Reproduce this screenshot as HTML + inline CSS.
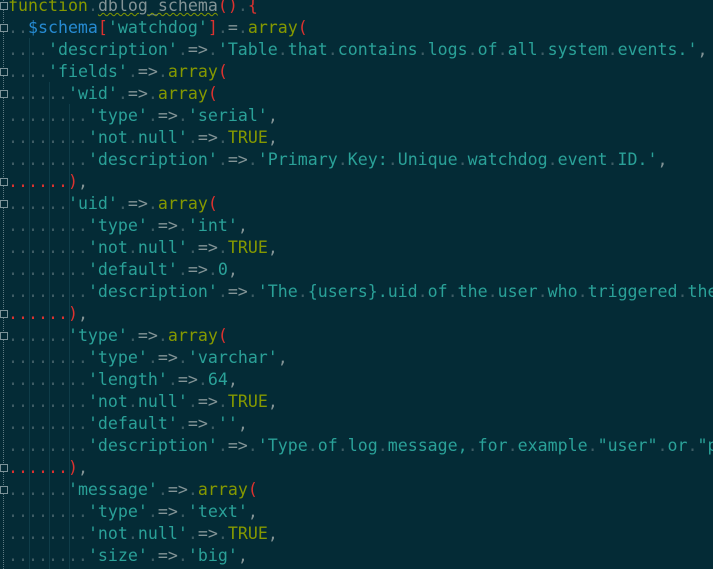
<!DOCTYPE html>
<html><head><meta charset="utf-8"><style>
html,body{margin:0;padding:0;background:#042b36;width:713px;height:569px;overflow:hidden;position:relative}
#c{position:absolute;left:8px;top:-5px;width:705px;height:574px;overflow:hidden;font-family:"DejaVu Sans Mono","Liberation Mono",monospace;font-size:16.6px;line-height:22px;white-space:pre;color:#2aa198}
i{font-style:normal;color:#3e5c64}
.k{color:#859900}.p{color:#dc322f}.v{color:#268bd2}.o{color:#839496}.f{color:#839496;text-decoration:underline wavy #859900;text-decoration-thickness:1px}
.r i{color:#dc322f}
#g{position:absolute;left:3px;top:0;width:0;height:569px;border-left:1px dotted #5c7a82}
.fd{position:absolute;left:0;width:6px;height:6px;border:1px solid #7c9399;background:#042b36}
.ig{position:absolute;top:38px;bottom:0;width:1px;background:#0f3d49}
</style></head><body>
<div class="ig" style="left:29px"></div>
<div class="ig" style="left:49px;top:82px"></div>
<div class="ig" style="left:69px;top:104px"></div>
<div id="g"></div>
<div class="fd" style="top:2px"></div><div class="fd" style="top:24px"></div><div class="fd" style="top:68px"></div><div class="fd" style="top:90px"></div><div class="fd" style="top:178px"></div><div class="fd" style="top:200px"></div><div class="fd" style="top:310px"></div><div class="fd" style="top:332px"></div><div class="fd" style="top:464px"></div><div class="fd" style="top:486px"></div>
<div id="c"><span class="k">function</span><i>.</i><span class="f">dblog_schema</span><span class="p">()</span><i>.</i><span class="p">{</span>
<i>..</i><span class="v">$schema</span><span class="p">[</span>'watchdog'<span class="p">]</span><i>.</i><span class="o">=</span><i>.</i><span class="k">array</span><span class="p">(</span>
<i>....</i>'description'<i>.</i><span class="o">=&gt;</span><i>.</i>'Table<i>.</i>that<i>.</i>contains<i>.</i>logs<i>.</i>of<i>.</i>all<i>.</i>system<i>.</i>events.'<span class="o">,</span>
<i>....</i>'fields'<i>.</i><span class="o">=&gt;</span><i>.</i><span class="k">array</span><span class="p">(</span>
<i>......</i>'wid'<i>.</i><span class="o">=&gt;</span><i>.</i><span class="k">array</span><span class="p">(</span>
<i>........</i>'type'<i>.</i><span class="o">=&gt;</span><i>.</i>'serial'<span class="o">,</span>
<i>........</i>'not<i>.</i>null'<i>.</i><span class="o">=&gt;</span><i>.</i><span class="k">TRUE</span><span class="o">,</span>
<i>........</i>'description'<i>.</i><span class="o">=&gt;</span><i>.</i>'Primary<i>.</i>Key:<i>.</i>Unique<i>.</i>watchdog<i>.</i>event<i>.</i>ID.'<span class="o">,</span>
<span class="r"><i>......</i></span><span class="p">)</span><span class="o">,</span>
<i>......</i>'uid'<i>.</i><span class="o">=&gt;</span><i>.</i><span class="k">array</span><span class="p">(</span>
<i>........</i>'type'<i>.</i><span class="o">=&gt;</span><i>.</i>'int'<span class="o">,</span>
<i>........</i>'not<i>.</i>null'<i>.</i><span class="o">=&gt;</span><i>.</i><span class="k">TRUE</span><span class="o">,</span>
<i>........</i>'default'<i>.</i><span class="o">=&gt;</span><i>.</i>0<span class="o">,</span>
<i>........</i>'description'<i>.</i><span class="o">=&gt;</span><i>.</i>'The<i>.</i>{users}.uid<i>.</i>of<i>.</i>the<i>.</i>user<i>.</i>who<i>.</i>triggered<i>.</i>the<i>.</i>event.'<span class="o">,</span>
<span class="r"><i>......</i></span><span class="p">)</span><span class="o">,</span>
<i>......</i>'type'<i>.</i><span class="o">=&gt;</span><i>.</i><span class="k">array</span><span class="p">(</span>
<i>........</i>'type'<i>.</i><span class="o">=&gt;</span><i>.</i>'varchar'<span class="o">,</span>
<i>........</i>'length'<i>.</i><span class="o">=&gt;</span><i>.</i>64<span class="o">,</span>
<i>........</i>'not<i>.</i>null'<i>.</i><span class="o">=&gt;</span><i>.</i><span class="k">TRUE</span><span class="o">,</span>
<i>........</i>'default'<i>.</i><span class="o">=&gt;</span><i>.</i>''<span class="o">,</span>
<i>........</i>'description'<i>.</i><span class="o">=&gt;</span><i>.</i>'Type<i>.</i>of<i>.</i>log<i>.</i>message,<i>.</i>for<i>.</i>example<i>.</i>"user"<i>.</i>or<i>.</i>"page<i>.</i>not<i>.</i>found."'<span class="o">,</span>
<span class="r"><i>......</i></span><span class="p">)</span><span class="o">,</span>
<i>......</i>'message'<i>.</i><span class="o">=&gt;</span><i>.</i><span class="k">array</span><span class="p">(</span>
<i>........</i>'type'<i>.</i><span class="o">=&gt;</span><i>.</i>'text'<span class="o">,</span>
<i>........</i>'not<i>.</i>null'<i>.</i><span class="o">=&gt;</span><i>.</i><span class="k">TRUE</span><span class="o">,</span>
<i>........</i>'size'<i>.</i><span class="o">=&gt;</span><i>.</i>'big'<span class="o">,</span></div>
</body></html>
